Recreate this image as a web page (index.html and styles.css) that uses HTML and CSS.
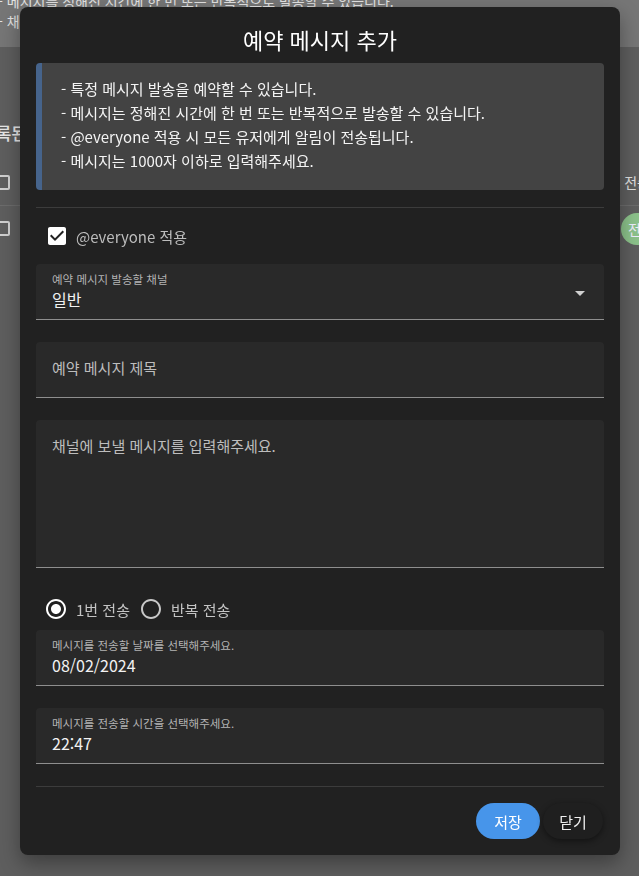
FILE: index.html
```html
<!DOCTYPE html>
<html lang="ko">
<head>
<meta charset="utf-8">
<link rel="stylesheet" href="styles.css">
</head>
<body>
<div class="page">
  <header class="page-head">
    <p class="bg-line first">- 메시지를 정해진 시간에 한 번 또는 반복적으로 발송할 수 있습니다.</p>
    <p class="bg-line">- 채널을 선택해주세요.</p>
  </header>
  <main class="page-body">
    <div class="bg-title">등록된 예약 메시지</div>
    <div class="bg-row head"><span class="bg-check"></span><span class="bg-right">전송</span></div>
    <div class="bg-row"><span class="bg-check"></span><span class="bg-chip">전</span></div>
  </main>
</div>

<div class="overlay">
  <div class="dialog">
    <h2 class="dialog-title">예약 메시지 추가</h2>
    <div class="info">
      <p>- 특정 메시지 발송을 예약할 수 있습니다.</p>
      <p>- 메시지는 정해진 시간에 한 번 또는 반복적으로 발송할 수 있습니다.</p>
      <p>- @everyone 적용 시 모든 유저에게 알림이 전송됩니다.</p>
      <p>- 메시지는 1000자 이하로 입력해주세요.</p>
    </div>
    <hr class="divider top">
    <label class="check-row">
      <svg class="cb" viewBox="0 0 24 24" width="24" height="24"><path fill="#ffffff" d="M19 3H5c-1.11 0-2 .9-2 2v14c0 1.1.89 2 2 2h14c1.11 0 2-.9 2-2V5c0-1.1-.89-2-2-2zm-9 14l-5-5 1.41-1.41L10 14.170l7.59-7.59L19 8l-9 9z"/></svg>
      <span class="check-label">@everyone 적용</span>
    </label>
    <div class="field select">
      <span class="f-label">예약 메시지 발송할 채널</span>
      <span class="f-value">일반</span>
      <svg class="arrow" viewBox="0 0 24 24" width="24" height="24"><path fill="#d0d0d0" d="M7 10l5 5 5-5z"/></svg>
    </div>
    <div class="field plain">
      <span class="f-placeholder">예약 메시지 제목</span>
    </div>
    <div class="field area">
      <span class="f-placeholder">채널에 보낼 메시지를 입력해주세요.</span>
    </div>
    <div class="radio-row">
      <label class="radio">
        <svg viewBox="0 0 24 24" width="24" height="24"><path fill="#ffffff" d="M12 7c-2.76 0-5 2.24-5 5s2.24 5 5 5 5-2.24 5-5-2.24-5-5-5zm0-5C6.48 2 2 6.48 2 12s4.48 10 10 10 10-4.48 10-10S17.52 2 12 2zm0 18c-4.42 0-8-3.58-8-8s3.58-8 8-8 8 3.58 8 8-3.58 8-8 8z"/></svg>
        <span>1번 전송</span>
      </label>
      <label class="radio">
        <svg viewBox="0 0 24 24" width="24" height="24"><path fill="#c8c8c8" d="M12 2C6.48 2 2 6.48 2 12s4.48 10 10 10 10-4.48 10-10S17.52 2 12 2zm0 18c-4.42 0-8-3.58-8-8s3.58-8 8-8 8 3.58 8 8-3.58 8-8 8z"/></svg>
        <span>반복 전송</span>
      </label>
    </div>
    <div class="field date">
      <span class="f-label">메시지를 전송할 날짜를 선택해주세요.</span>
      <span class="f-value">08/02/2024</span>
    </div>
    <div class="field time">
      <span class="f-label">메시지를 전송할 시간을 선택해주세요.</span>
      <span class="f-value">22:47</span>
    </div>
    <hr class="divider bottom">
    <div class="actions">
      <button class="btn save">저장</button>
      <button class="btn close">닫기</button>
    </div>
  </div>
</div>
</body>
</html>
```

FILE: styles.css
```css
* { box-sizing: border-box; }
html, body { margin: 0; padding: 0; }
body {
  width: 639px;
  height: 876px;
  overflow: hidden;
  background: #5e5e5e;
  font-family: "Noto Sans CJK KR", "Noto Sans", sans-serif;
  color: #fff;
}
.page { width: 639px; height: 876px; overflow: hidden; }
.page-head {
  height: 47px;
  background: #767676;
  overflow: hidden;
}
.bg-line {
  margin: 0;
  font-size: 14px;
  line-height: 20px;
  color: #e2e2e2;
  white-space: nowrap;
  margin-left: -2px;
}
.bg-line.first { margin-top: -9px; }
.page-body { padding-top: 74px; }
.bg-title {
  font-size: 17px;
  line-height: 24px;
  font-weight: 500;
  color: #e6e6e6;
  margin-left: -20px;
  white-space: nowrap;
}
.bg-row {
  height: 46px;
  display: flex;
  align-items: center;
  justify-content: space-between;
  border-top: 1px solid #6c6c6c;
}
.bg-row.head { border-top: none; margin-top: 14px; }
.bg-check {
  width: 13px; height: 15px;
  border: 2px solid #cfcfcf;
  border-radius: 2px;
  margin-left: -3px;
}
.bg-right { color: #e0e0e0; font-size: 14px; margin-right: -11px; }
.bg-chip {
  width: 32px; height: 32px;
  border-radius: 50%;
  background: #8cc28b;
  color: #eef;
  font-size: 14px;
  display: flex; align-items: center; padding-left: 7px;
  margin-right: -14px;
}

.overlay {
  position: fixed;
  inset: 0;
  padding: 7px 19px 0 20px;
}
.dialog {
  width: 600px;
  height: 848px;
  background: #212121;
  border-radius: 8px;
  box-shadow: 0 8px 20px rgba(0,0,0,0.35);
  padding: 16px;
  display: flex;
  flex-direction: column;
}
.dialog-title {
  margin: 0 0 8px;
  font-size: 22px;
  line-height: 32px;
  font-weight: 400;
  text-align: center;
}
.info {
  background: #434343;
  border-left: 6px solid #46648c;
  border-radius: 4px;
  padding: 14px 12px 17px 19px;
}
.info p {
  margin: 0;
  font-size: 15px;
  line-height: 24px;
  color: #f4f4f4;
}
.divider { border: 0; height: 1px; margin: 0; background: #3c3c3c; flex-shrink: 0; }
.divider.top { margin-top: 17px; }
.divider.bottom { margin-top: 22px; }
.check-row {
  height: 56px;
  display: flex;
  align-items: center;
  gap: 7px;
  padding-left: 9px;
}
.check-label { color: #bdbdbd; font-size: 15px; }

.field {
  position: relative;
  background: #292929;
  border-radius: 4px 4px 0 0;
  border-bottom: 1px solid #8e8e8e;
  padding: 0 16px;
  display: flex;
  flex-direction: column;
  flex-shrink: 0;
}
.select, .date, .time { height: 56px; padding-top: 7px; }
.plain { height: 56px; margin-top: 22px; justify-content: center; padding-bottom: 3px; }
.area { height: 148px; margin-top: 22px; padding-top: 14px; }
.time { margin-top: 22px; }
.f-label {
  font-size: 11.5px;
  line-height: 16px;
  color: #b4b4b4;
}
.f-value {
  font-size: 16px;
  line-height: 24px;
  color: #f2f2f2;
}
.f-placeholder {
  font-size: 15px;
  line-height: 24px;
  color: #bdbdbd;
}
.arrow { position: absolute; right: 12px; top: 17px; }

.radio-row {
  display: flex;
  align-items: center;
  height: 22px;
  margin: 30px 0 10px;
  padding-left: 8px;
  gap: 9px;
}
.radio { display: flex; align-items: center; gap: 8px; }
.radio span { font-size: 15px; color: #c4c4c4; }

.actions {
  display: flex;
  justify-content: flex-end;
  gap: 3px;
  margin-top: 16px;
}
.btn {
  height: 36px;
  border: 0;
  border-radius: 18px;
  font-family: inherit;
  font-size: 15px;
  color: #fff;
  padding: 0;
}
.save { width: 64px; background: #4795ea; }
.close { width: 60px; background: #1f1f1f; box-shadow: 0 2px 6px rgba(0,0,0,0.45); color: #f0f0f0; margin-right: 1px; }
```
